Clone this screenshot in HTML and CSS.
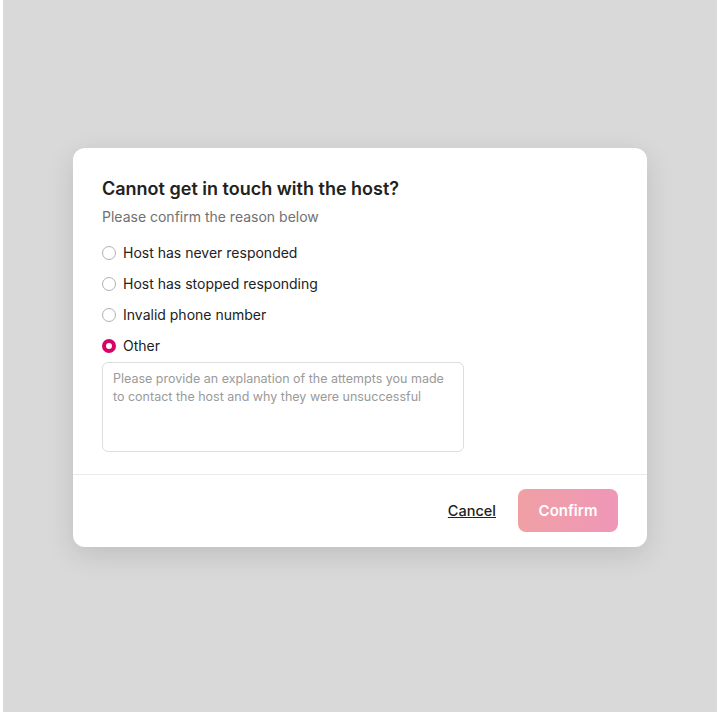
FILE: index.html
```html
<!DOCTYPE html>
<html lang="en">
<head>
  <meta charset="UTF-8" />
  <title>Cannot get in touch with the host?</title>
  <link rel="stylesheet" href="styles.css">
</head>
<body>
  <div class="screen">
    <div class="modal">
      <div class="modal-body">
        <h2>Cannot get in touch with the host?</h2>
        <p class="subtitle">Please confirm the reason below</p>

        <div class="options">
          <label class="option">
            <span class="radio"></span>
            Host has never responded
          </label>
          <label class="option">
            <span class="radio"></span>
            Host has stopped responding
          </label>
          <label class="option">
            <span class="radio"></span>
            Invalid phone number
          </label>
          <label class="option">
            <span class="radio checked"></span>
            Other
          </label>
        </div>

        <textarea class="explain" placeholder="Please provide an explanation of the attempts you made to contact the host and why they were unsuccessful"></textarea>
      </div>

      <div class="modal-footer">
        <a href="#" class="cancel">Cancel</a>
        <button class="confirm">Confirm</button>
      </div>
    </div>
  </div>
</body>
</html>
```

FILE: styles.css
```css
body {
  margin: 0;
  background: #ffffff;
  font-family: Inter, "Noto Sans", sans-serif;
  color: #222222;
}

.screen {
  margin: 0 3px;
  height: 712px;
  background: #d9d9d9;
  display: flex;
  justify-content: center;
  align-items: flex-start;
  padding-top: 148px;
  box-sizing: border-box;
}

.modal {
  width: 574px;
  background: #ffffff;
  border-radius: 12px;
  box-shadow: 0 8px 28px rgba(0, 0, 0, 0.12);
}

.modal-body {
  padding: 29px 29px 22px;
  border-bottom: 1px solid #ebebeb;
}

h2 {
  margin: 0;
  font-size: 18px;
  line-height: 24px;
  font-weight: 600;
  color: #222222;
}

.subtitle {
  margin: 6px 0 0;
  font-size: 14px;
  line-height: 20px;
  color: #717171;
}

.options {
  margin-top: 16px;
  display: flex;
  flex-direction: column;
  gap: 11px;
}

.option {
  display: flex;
  align-items: center;
  gap: 7px;
  font-size: 14px;
  line-height: 20px;
  color: #222222;
}

.radio {
  width: 14px;
  height: 14px;
  border: 1px solid #b0b0b0;
  border-radius: 50%;
  box-sizing: border-box;
  background: #ffffff;
}

.radio.checked {
  border: 4px solid #d70466;
}

.explain {
  display: block;
  margin-top: 6px;
  width: 362px;
  height: 90px;
  box-sizing: border-box;
  padding: 7px 6px 7px 10px;
  border: 1px solid #dddddd;
  border-radius: 6px;
  resize: none;
  font-family: inherit;
  font-size: 12.5px;
  line-height: 18px;
  color: #222222;
}

.explain::placeholder {
  color: #9a9a9a;
}

.modal-footer {
  display: flex;
  justify-content: flex-end;
  align-items: center;
  gap: 22px;
  padding: 14px 29px 15px;
}

.cancel {
  font-size: 14.5px;
  font-weight: 500;
  color: #222222;
  text-decoration: underline;
}

.confirm {
  width: 100px;
  height: 43px;
  border: none;
  border-radius: 8px;
  background: linear-gradient(90deg, #f0a0a4 0%, #ef97b8 100%);
  color: #ffffff;
  font-family: inherit;
  font-size: 15px;
  font-weight: 600;
}
```
